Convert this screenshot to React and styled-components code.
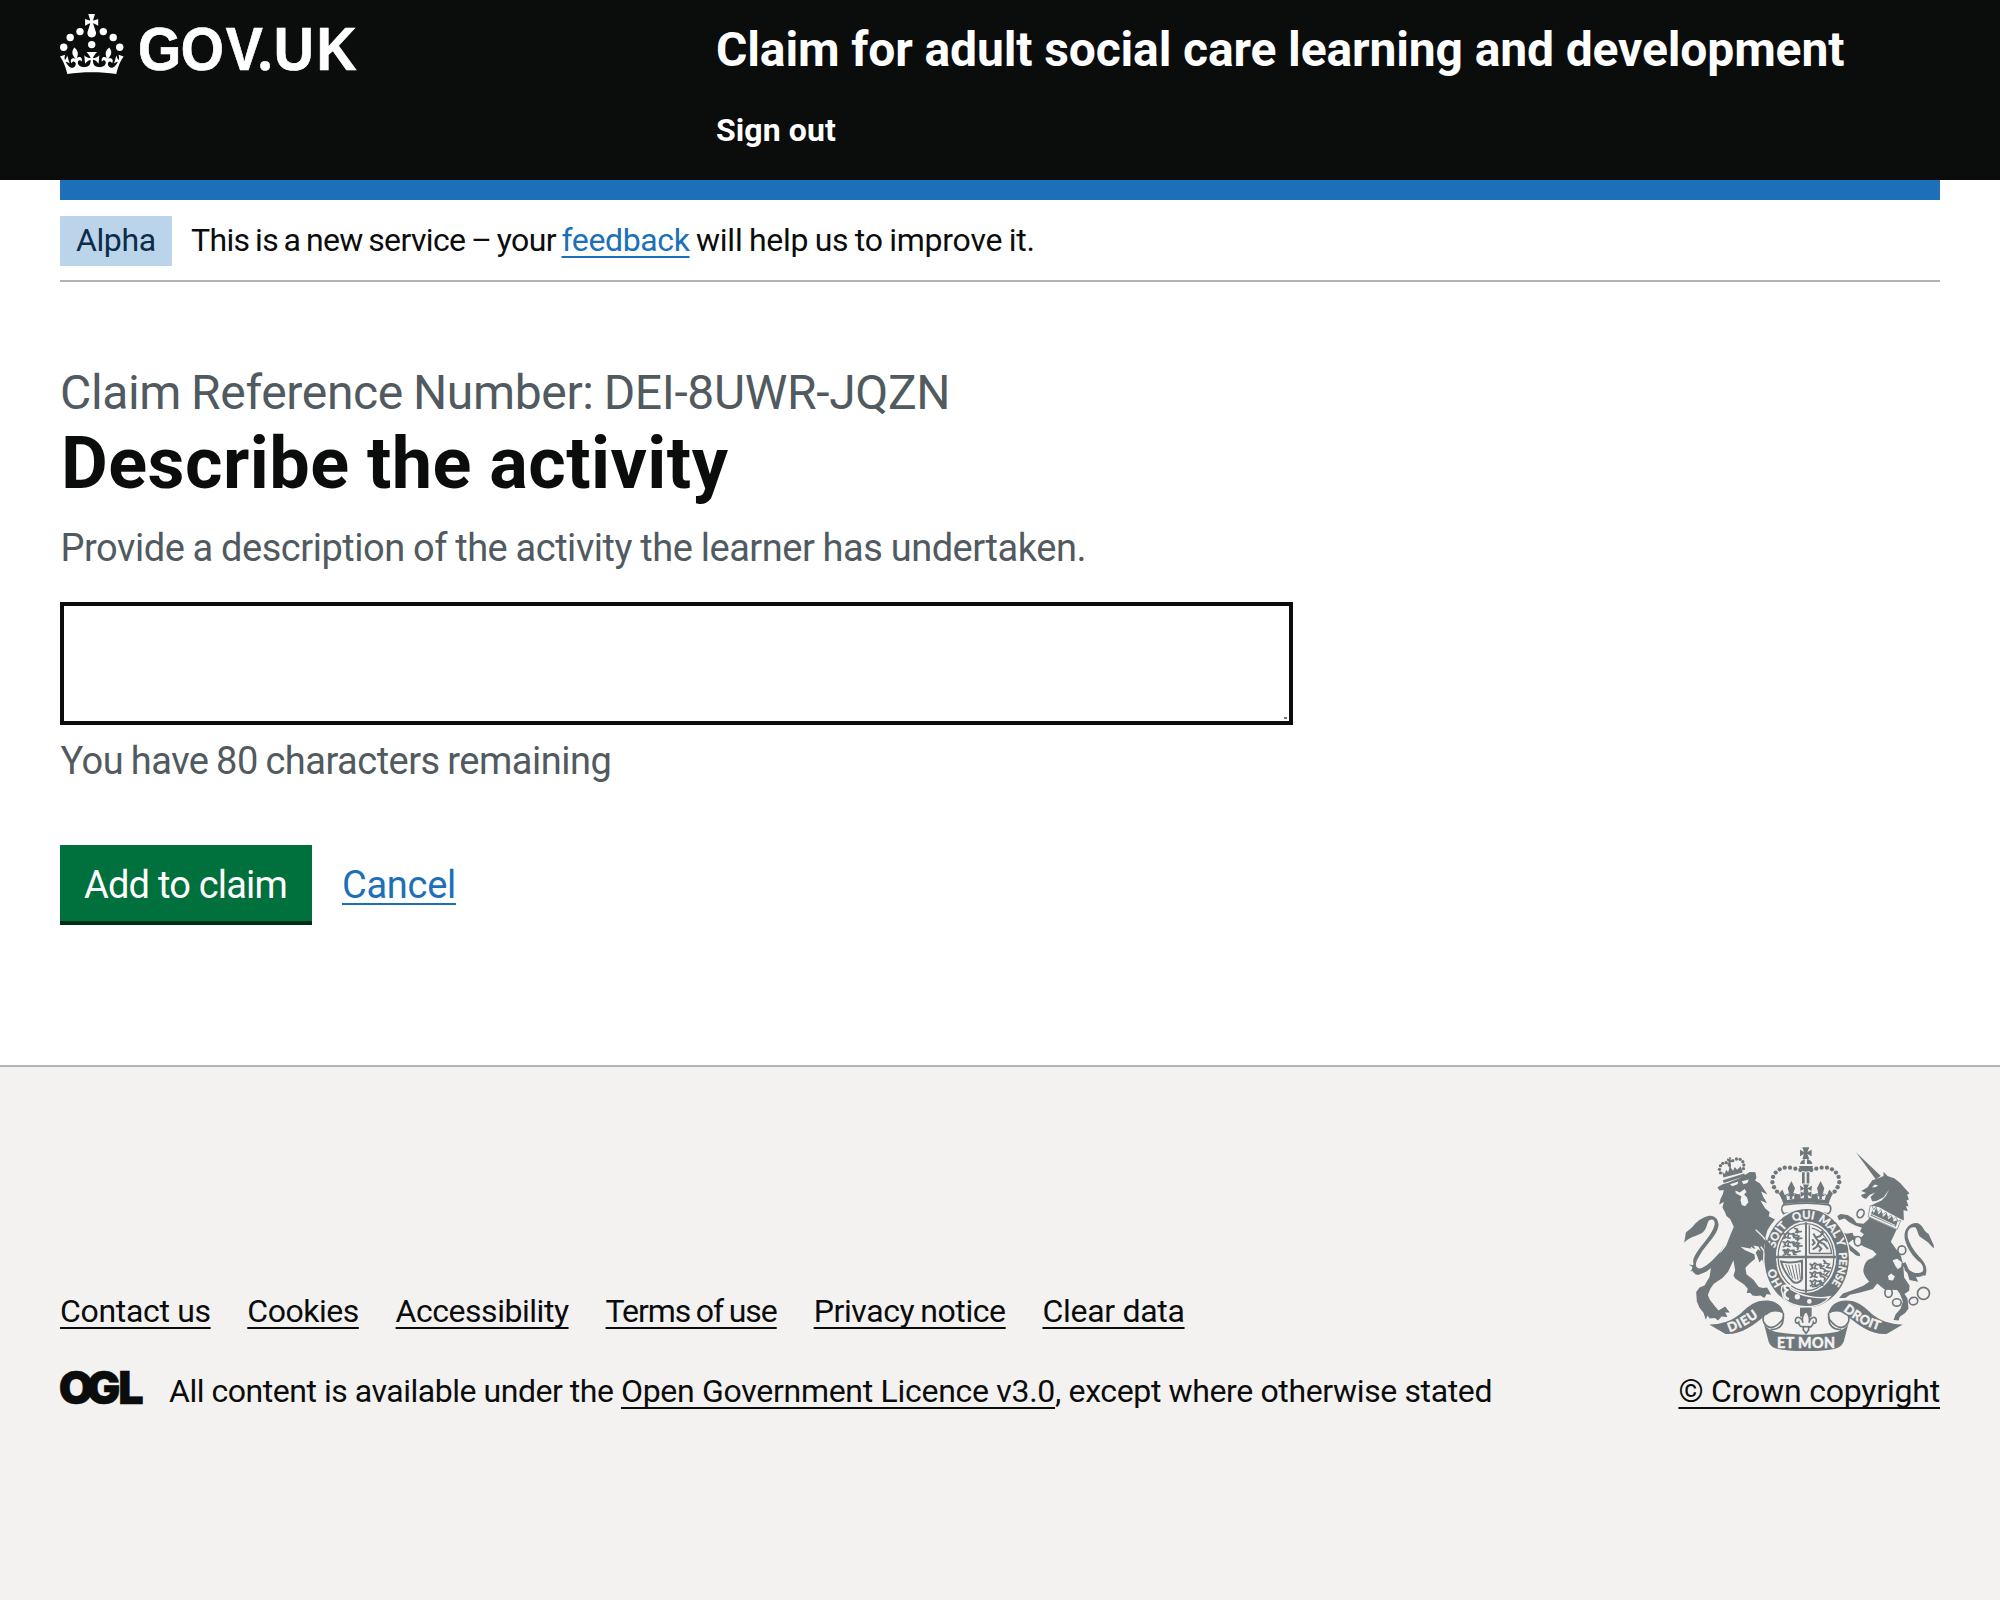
import React from 'react';
import styled, { createGlobalStyle } from 'styled-components';

const color = {
  ink: '#0b0c0c',
  brand: '#1d70b8',
  muted: '#505a5f',
  rule: '#b1b4b6',
  footer: '#f3f2f1',
  crest: '#6f777b',
};

const GlobalStyle = createGlobalStyle`
  *, *::before, *::after { box-sizing: border-box; }
  body {
    margin: 0;
    background: ${color.footer};
    color: ${color.ink};
    font-family: Roboto, "Liberation Sans", sans-serif;
    font-size: 32px;
    line-height: 50px;
  }
`;

const Page = styled.div`
  min-height: 1600px;
  display: flex;
  flex-direction: column;
`;

const Container = styled.div`
  margin: 0 60px;
`;

const Header = styled.header`
  height: 180px;
  flex: none;
  background: ${color.ink};
  color: #fff;
`;

const HeaderRow = styled(Container)`
  display: grid;
  grid-template-columns: 656px 1fr;
`;

const LogoLink = styled.a`
  display: block;
  padding-top: 14px;
  color: #fff;
  svg { display: block; overflow: visible; }
`;

const HeaderContent = styled.div`
  padding-top: 20px;
  display: flex;
  flex-direction: column;
  gap: 25px;
`;

const ServiceName = styled.a`
  font-size: 48px;
  line-height: 60px;
  font-weight: 700;
  letter-spacing: -0.13px;
  white-space: nowrap;
`;

const NavItem = styled.a`
  font-weight: 700;
  letter-spacing: 0.1px;
`;

const BrandBar = styled.div`
  height: 20px;
  background: ${color.brand};
`;

const PhaseBanner = styled.div`
  height: 82px;
  padding-top: 16px;
  display: flex;
  gap: 19px;
  border-bottom: 2px solid ${color.rule};
`;

const Tag = styled.strong`
  width: 112px;
  height: 50px;
  padding-left: 16px;
  background: #bbd4ea;
  color: #0c2d4a;
  font-weight: 400;
  line-height: 48px;
  letter-spacing: -0.4px;
`;

const BannerText = styled.span`
  line-height: 48px;
  white-space: nowrap;
`;

const Run = styled.span`
  letter-spacing: ${(p) => p.$track}px;
  word-spacing: ${(p) => p.$gap || 0}px;
`;

const Link = styled.a`
  color: ${(p) => (p.$plain ? color.ink : color.brand)};
  text-decoration: underline;
  text-decoration-thickness: 2px;
  text-underline-offset: ${(p) => p.$offset || 5}px;
  text-decoration-skip-ink: none;
  letter-spacing: ${(p) => p.$track || 0}px;
  word-spacing: ${(p) => p.$gap || 0}px;
`;

const Top = styled.div`
  flex: none;
  height: 885px;
  background: #fff;
`;

const Main = styled.main`
  padding-top: 81px;
  font-size: 38px;
`;

const Caption = styled.span`
  display: block;
  height: 62px;
  font-size: 48px;
  line-height: 60px;
  letter-spacing: -0.35px;
  word-spacing: -1.5px;
  color: ${color.muted};
`;

const Heading = styled.h1`
  margin: 0 0 21px;
  padding-left: 1px;
  font-size: 72px;
  line-height: 77px;
  font-weight: 700;
  letter-spacing: 0.45px;
  word-spacing: -1px;
`;

const Hint = styled.div`
  padding-left: 0.5px;
  color: ${color.muted};
  letter-spacing: ${(p) => p.$track}px;
  word-spacing: ${(p) => p.$gap || 0}px;
`;

const TextArea = styled.textarea`
  display: block;
  width: 1233px;
  height: 123px;
  margin: 29px 0 11px;
  padding: 10px;
  border: 4px solid ${color.ink};
  border-radius: 0;
  background: linear-gradient(#777, #777) no-repeat right 2px bottom 2px / 3px 2px #fff;
  font: inherit;
  outline: none;
  overflow: hidden;
  resize: none;
`;

const ButtonGroup = styled.div`
  margin-top: 59px;
  display: flex;
  align-items: flex-start;
  gap: 30px;
`;

const Button = styled.button`
  width: 252px;
  height: 76px;
  padding: 15px 0 11px 24px;
  border: 0;
  background: #00703c;
  box-shadow: 0 4px 0 #002d18;
  color: #fff;
  font: inherit;
  letter-spacing: -0.8px;
  text-align: left;
  white-space: nowrap;
`;

const CancelSlot = styled.div`
  padding-top: 15px;
`;

const Footer = styled.footer`
  flex: 1;
  border-top: 2px solid ${color.rule};
  background: ${color.footer};
  padding-top: 80px;
`;

const FooterRow = styled(Container)`
  display: flex;
  justify-content: space-between;
  align-items: flex-end;
`;

const FooterLinks = styled.ul`
  margin: 0 0 30px;
  padding: 0;
  list-style: none;
  display: flex;
  gap: 36.8px;
`;

const FooterItem = styled.li`
  width: ${(p) => p.$width}px;
  white-space: nowrap;
`;

const Licence = styled.div`
  display: flex;
  gap: 27px;
  white-space: nowrap;
  svg { display: block; margin-top: 3px; overflow: visible; }
`;

const Copyright = styled.div`
  display: flex;
  flex-direction: column;
  align-items: center;
  gap: 15px;
  svg { display: block; }
`;

function GovLogo() {
  return (
    <LogoLink>
      <svg width="324" height="62" viewBox="0 0 324 62" fill="#fff" role="img" aria-label="GOV.UK">
        <circle cx="20" cy="17.6" r="3.7" />
        <circle cx="10.2" cy="23.5" r="3.7" />
        <circle cx="3.7" cy="33.2" r="3.7" />
        <circle cx="31.7" cy="30.6" r="3.7" />
        <circle cx="43.3" cy="17.6" r="3.7" />
        <circle cx="53.2" cy="23.5" r="3.7" />
        <circle cx="59.7" cy="33.2" r="3.7" />
        <path d="M33.1,9.8c.2-.1.3-.3.5-.5l4.6,2.4v-6.8l-4.6,1.5c-.1-.2-.3-.3-.5-.5l1.9-5.9h-6.7l1.9,5.9c-.2.1-.3.3-.5.5l-4.6-1.5v6.8l4.6-2.4c.1.2.3.3.5.5l-2.6,8c-.9,2.8,1.2,5.7,4.1,5.7h0c3,0,5.1-2.9,4.1-5.7l-2.6-8ZM37,37.9s-3.4,3.8-4.1,6.1c2.2,0,4.2-.5,6.4-2.8l-.7,8.5c-2-2.8-4.4-4.1-5.7-3.8.1,3.1.5,6.7,5.8,7.2,3.7.3,6.7-1.5,7-3.8.4-2.6-2-4.3-3.7-1.6-1.4-4.5,2.4-6.1,4.9-3.2-1.9-4.5-1.8-7.7,2.4-10.9,3,4,2.6,7.3-1.2,11.1,2.4-1.3,6.2,0,4,4.6-1.2-2.8-3.7-2.2-4.2.2-.3,1.7.7,3.7,3,4.2,1.9.3,4.7-.9,7-5.9-1.3,0-2.4.7-3.9,1.7l2.4-8c.6,2.3,1.4,3.7,2.2,4.5.6-1.6.5-2.8,0-5.3l5,1.8c-2.6,3.6-5.2,8.7-7.3,17.5-7.4-1.1-15.7-1.7-24.5-1.7h0c-8.8,0-17.1.6-24.5,1.7-2.1-8.9-4.7-13.9-7.3-17.5l5-1.8c-.5,2.5-.6,3.7,0,5.3.8-.8,1.6-2.3,2.2-4.5l2.4,8c-1.5-1-2.6-1.7-3.9-1.7,2.3,5,5.2,6.2,7,5.9,2.3-.4,3.3-2.4,3-4.2-.5-2.4-3-3.1-4.2-.2-2.2-4.6,1.6-6,4-4.6-3.7-3.7-4.2-7.1-1.2-11.1,4.2,3.2,4.3,6.4,2.4,10.9,2.5-2.8,6.3-1.3,4.9,3.2-1.8-2.7-4.1-1-3.7,1.6.3,2.3,3.3,4.1,7,3.8,5.4-.5,5.7-4.2,5.8-7.2-1.3-.2-3.7,1-5.7,3.8l-.7-8.5c2.2,2.3,4.2,2.7,6.4,2.8-.7-2.3-4.1-6.1-4.1-6.1h10.6Z" />
        <text
          transform="scale(0.91 1)"
          x="85.6 132.8 182.2 216.4 235 281.8"
          y="56"
          fontFamily="Liberation Sans, sans-serif"
          fontWeight="700"
          fontSize="61"
          stroke="#fff"
          strokeWidth="0.7"
        >
          GOV<tspan fontFamily="Roboto, sans-serif" fontSize="63">.</tspan>UK
        </text>
      </svg>
    </LogoLink>
  );
}

function OglLogo() {
  return (
    <svg width="82" height="42" viewBox="0 0 82 42" fill={color.ink} stroke={color.ink} strokeWidth="0.6">
      <text x="-1.3 26.5 58.2" y="35" fontFamily="Inter, sans-serif" fontWeight="900" fontSize="45">OGL</text>
    </svg>
  );
}

const archDots = [
  [391, 119], [376, 115], [360, 112], [344, 112], [329, 117], [317, 127], [309, 140], [307, 156], [312, 171], [321, 184],
];

const lionDots = [
  [151, 128], [148, 117], [151, 106], [158, 99], [168, 97], [188, 91], [199, 86], [210, 87], [218, 94], [221, 104], [220, 115],
];

function Beasts({ x, y }) {
  return (
    <g transform={`translate(${x} ${y})`} fill="none" stroke={color.crest} strokeWidth="5" strokeLinecap="round">
      {[0, 25, 50].map((dy) => (
        <g key={dy} transform={`translate(0 ${dy})`}>
          <path d="M2 4l8 3 6-6 8 5 10-2 4 7 6-2M6 10l5 5-8 4M18 8l-2 9 7 1M32 8l2 8 7 1M45 2l3-5-5-4" />
        </g>
      ))}
    </g>
  );
}

function RoyalArms() {
  const bg = color.footer;
  return (
    <svg width="250" height="204" viewBox="42 50 750 613" fill={color.crest}>
      {/* lion */}
      <path d="M158 150L222 130L226 137L161 158Z" />
      {lionDots.map(([x, y]) => <circle key={x} cx={x} cy={y} r="5" />)}
      <path d="M160 142L156 124L164 131L168 118L174 126L178 112L174 107L171 98L177 96L170 90L172 84L178 87L176 80L184 82L181 88L187 93L181 97L183 105L182 112L189 121L194 110L201 118L212 108L218 127Z" />
      <path d="M142 171L158 162L176 157L206 145L224 134L239 125L256 126L259 142L255 151L269 159L278 172L292 193L273 184L279 199L291 219L271 211L285 234L299 246L296 258L315 268L303 283L292 300L286 322L305 344L314 367L319 397L312 407L305 396L298 411L291 398L282 403L276 387L268 397L263 382L257 368L264 357L272 363L265 349L250 346L256 356L236 354L211 350L225 360L253 372L255 386L239 399L226 413L229 432L250 449L266 471L279 474L291 472L297 482L303 494L290 492L283 504L271 496L260 498L247 496L241 489L230 489L233 476L222 463L196 446L190 437L195 420L190 390L174 425L157 444L131 461L121 475L113 495L119 509L135 529L145 541L165 529L179 547L165 547L172 561L154 559L144 571L134 564L119 565L112 556L107 569L100 548L88 533L80 514L78 486L88 472L103 466L118 441L122 416L134 389L150 370L168 347L181 314L191 290L180 266L169 257L165 247L157 232L161 215L147 223L151 206L158 192L161 179L148 181Z" />
      <path d="M70 401C62 417 65 430 84 435L108 425L125 412C142 396 151 379 151 367L164 340L151 365L132 385C112 406 93 418 84 414C71 409 78 392 90 373C111 339 142 314 145 287C147 267 132 253 115 257C90 263 78 276 65 292L47 307L42 338C55 321 77 318 94 309C110 300 108 285 116 271C128 263 136 272 133 285C126 311 101 337 84 360C72 377 66 390 70 401Z" />
      <path d="M70 405L56 403L69 412L60 424L72 420L77 434L84 428Z" />
      <path d="M179 162L205 154L202 162L187 168ZM215 153L236 148L232 158L220 162ZM196 181L209 187L224 176L229 185L222 193L231 202L235 216L225 228L215 224L211 210L214 199L197 189Z" fill={bg} />
      <path d="M257 299C278 318 302 343 315 373M243 351L255 363M272 349L284 366" stroke={bg} strokeWidth="4" fill="none" />

      {/* unicorn */}
      <path d="M558 66L633 137L618 148Z" />
      <path d="M574 182L593 171L607 150L628 143L641 137L641 124L653 137L674 145L691 158L705 174L719 190L712 193L717 208L710 211L716 228L708 227L714 242L701 240L702 271L688 264L660 249L628 231L603 226L617 219L635 211L648 197L658 178L641 201L619 212L607 213L602 200L616 187L599 194L588 206L577 201L573 194L589 188Z" />
      <path d="M606 171L615 163L625 166L616 171Z" fill={bg} />
      <path d="M601 226L607 227L611 239L618 230L624 247L633 238L638 254L648 246L653 263L663 254L668 269L678 260L684 273L693 270L682 298L595 259Z" fill={bg} stroke={color.crest} strokeWidth="2" />
      <path d="M607 240L612 249L618 234L626 253L635 242L639 260L651 249L655 267L667 258L671 274L684 270L678 290L602 256Z" />
      <path d="M604 252L676 286" stroke={bg} strokeWidth="3" />
      <path d="M596 267L581 281L560 278L550 265L533 254L512 251L502 257L507 270L524 265L538 276L556 286L576 293L570 303L582 312L573 323L551 317L548 308L530 311L514 305L521 322L516 338L527 351L547 366L559 376L571 378L569 369L544 348L535 339L548 329L561 338L583 350L609 361L620 372L607 384C592 388 583 396 580 422C582 436 590 445 598 455L580 467L545 481L519 490L507 504L526 504L540 494L571 487L609 477L622 460L645 479L682 480L690 491L699 514L692 536L677 553L671 570L686 571L690 560L706 549L716 535L713 505L704 492L718 482L719 466L703 442L700 403L693 377L680 359L663 335L680 299L597 261Z" />
      <path d="M695 400L712 426L719 450L745 455L738 440L718 421L707 396Z" />
      <path d="M766 438L755 432C763 420 762 408 752 398C729 379 712 356 705 327C700 300 715 279 740 278C760 281 758 301 776 311L792 345L792 355L774 336L754 322C744 318 745 302 737 292C719 288 711 303 714 322C722 348 736 367 756 388C771 405 773 423 766 438Z" />
      <path d="M706 405C722 430 745 436 764 420L768 430C748 449 719 440 704 419Z" />
      <path d="M668 390L682 386L696 396L694 410L684 417L677 408ZM654 438L664 430L675 439L669 451L657 450Z" fill={bg} />
      <g fill="none" stroke={color.crest} strokeWidth="5">
        <ellipse cx="572" cy="250" rx="10" ry="13" transform="rotate(25 572 250)" />
        <ellipse cx="564" cy="333" rx="11" ry="14" fill={bg} />
        <ellipse cx="696" cy="360" rx="12" ry="13" fill={bg} />
        <ellipse cx="656" cy="488" rx="11" ry="14" />
        <ellipse cx="681" cy="517" rx="13" ry="11" />
        <ellipse cx="731" cy="513" rx="13" ry="11" transform="rotate(-20 731 513)" />
        <circle cx="761" cy="490" r="18" />
      </g>

      {/* crown */}
      <path d="M397 51H418L412 65L425 58V78L412 71L418 86H397L402 71L390 78V58L402 65ZM390 101C392 91 404 86 404 86V101H390ZM411 86C421 88 427 95 427 101H411ZM387 107H429C427 119 418 124 408 124S390 119 387 107Z" />
      <path d="M396 126H404V160H396ZM410 126H418V160H410Z" />
      {archDots.map(([x, y]) => (
        <g key={`${x}-${y}`}>
          <circle cx={x} cy={y} r="6.5" />
          <circle cx={815 - x} cy={y} r="6.5" />
        </g>
      ))}
      <path d="M315 175L325 191L337 178L344 194L357 188L353 174L364 152L375 174L370 188L388 193L392 184L390 166L403 174L399 163H417L412 174L426 166L424 184L428 193L445 188L441 174L452 152L463 174L459 188L471 194L478 178L490 191L500 175C488 190 479 207 476 221C433 216 382 216 340 221C336 206 327 189 315 175Z" />
      <path d="M390 183L402 176L399 195L408 184L418 195L413 176L426 183L424 204H392ZM349 196L361 188L364 199L374 190L372 206L351 209ZM442 190L452 199L457 188L468 196L464 209L444 206Z" fill={bg} />
      <path d="M408 176L412 189L424 184V200L413 194L416 207H400L403 194L392 200V184L403 189ZM364 172L368 190L376 197L367 198V208H359V198L351 197L359 190ZM452 172L457 190L465 197L456 198V208H448V198L440 197L448 190Z" />
      <path d="M340 224C381 218 435 218 477 224C486 231 483 245 474 251C430 240 385 240 341 251C333 241 334 230 340 224Z" fill={bg} stroke={color.crest} strokeWidth="5" />

      {/* garter and shield */}
      <path d="M346 250C385 232 432 232 470 250C510 275 541 325 541 384C541 468 482 536 410 536S279 468 279 384C279 325 305 275 346 250Z" fill={bg} />
      <ellipse cx="410" cy="384" rx="127" ry="148" />
      <ellipse cx="408" cy="381" rx="91" ry="108" fill={bg} />
      <ellipse cx="408" cy="381" rx="84" ry="101" fill="none" stroke={color.crest} strokeWidth="4" />
      <path d="M405 276H411V488H405ZM318 377H498V384H318Z" />
      <path d="M418 285V370M418 370H487M425 294C450 298 478 325 485 368" stroke={color.crest} strokeWidth="4" fill="none" />
      <path d="M430 310L437 322L450 318L459 308L454 302M437 322L447 335L440 350L428 358M447 335L462 342L474 357M447 335L461 326L472 333M444 344L454 356L447 364M427 327L434 338L426 345" stroke={color.crest} strokeWidth="6" fill="none" />
      <Beasts x={337} y={306} />
      <Beasts x={418} y={398} />
      <path d="M372 294L382 297 378 306 396 304M376 315L387 318 380 326 397 324M376 337L388 340 380 348 398 347M463 398L478 402 470 412 484 414M463 422L477 424 466 436 476 440M340 358L352 362 346 370M366 362L378 366 392 362M425 470L440 468 450 460" stroke={color.crest} strokeWidth="5" fill="none" />
      <path d="M333 394C350 398 370 400 396 392V445C392 458 376 462 368 454C355 441 341 424 333 394Z" fill="none" stroke={color.crest} strokeWidth="6" />
      <path d="M347 402L360 436M356 404L368 445M366 404L376 448M376 403L384 449M386 401L391 446" stroke={color.crest} strokeWidth="3" />
      <path id="motto" d="M410 502A98 118 0 0 1 312 384A98 118 0 0 1 410 266A98 118 0 0 1 508 384A98 118 0 0 1 410 502" fill="none" />
      <g fill={bg} stroke={bg} strokeWidth="1" fontFamily="Lato, sans-serif" fontWeight="700" fontSize="34" textAnchor="middle">
        <text><textPath href="#motto" startOffset="113">HO</textPath></text>
        <text><textPath href="#motto" startOffset="238">SOIT</textPath></text>
        <text><textPath href="#motto" startOffset="330">QUI</textPath></text>
        <text><textPath href="#motto" startOffset="411">MAL</textPath></text>
        <text><textPath href="#motto" startOffset="465">Y</textPath></text>
        <text fontSize="32"><textPath href="#motto" startOffset="542">PENSE</textPath></text>
      </g>
      <path d="M286 326L304 346L316 370L320 404L311 408L303 397L300 410L290 402L282 360Z" />
      <path d="M335 470C345 460 360 466 363 478C398 500 443 507 479 500L468 512C437 536 380 537 345 509C333 499 341 490 334 482Z" stroke={bg} strokeWidth="4" />
      <path d="M363 467C340 463 339 474 351 480C340 487 339 503 357 507" fill="none" stroke={bg} strokeWidth="7" />
      <circle cx="382" cy="500" r="8" fill={bg} />
      <circle cx="418" cy="514" r="7" fill={bg} />

      {/* fleur-de-lis */}
      <path d="M390 533H425V560H390Z" />
      <path d="M408 542C418 555 421 566 417 578C421 560 439 556 439 572C438 582 432 581 430 577C428 591 420 591 416 590L416 600L408 610L400 600V590C394 591 387 589 386 577C382 582 376 579 376 571C377 557 395 560 399 578C394 566 398 554 408 542Z" fill={bg} stroke={color.crest} strokeWidth="5" />
      <path d="M397 590H420" stroke={color.crest} strokeWidth="5" />

      {/* ribbon */}
      <path d="M117 583C150 584 185 573 210 552C236 525 256 511 288 511C319 511 336 528 342 552C320 539 302 544 292 553L285 556C252 585 211 615 166 612Z" />
      <path d="M699 583C666 584 631 573 606 552C580 525 560 511 528 511C497 511 480 528 474 552C496 539 514 544 524 553L531 556C564 585 605 615 650 612Z" />
      <path d="M281 558C275 570 283 588 299 592C319 595 332 575 340 565V549M338 560C344 584 325 601 302 598M535 558C541 570 533 588 517 592C497 595 484 575 476 565V549M478 560C472 584 491 601 514 598" fill="none" stroke={color.crest} strokeWidth="5" />
      <path d="M281 579C288 595 302 602 324 607C380 617 440 617 494 607C517 602 530 593 536 579L524 625C521 643 512 652 493 657C440 666 375 666 323 657C304 652 296 643 293 625Z" />
      <path id="dieu" d="M178 606C215 595 247 574 284 545" fill="none" />
      <path id="droit" d="M519 542C556 570 590 593 650 607" fill="none" />
      <g fill={bg} stroke={bg} strokeWidth="1.6" fontFamily="Lato, sans-serif" fontWeight="700">
        <text fontSize="38" letterSpacing="3"><textPath href="#dieu">DIEU</textPath></text>
        <text fontSize="38" letterSpacing="1.5"><textPath href="#droit">DROIT</textPath></text>
        <text x="321" y="654" fontSize="43" textLength="174">ET MON</text>
      </g>
    </svg>
  );
}

const footerLinks = [
  { label: 'Contact us', width: 150.5, track: -0.33 },
  { label: 'Cookies', width: 111.5, track: -0.47 },
  { label: 'Accessibility', width: 173.2, track: -0.47 },
  { label: 'Terms of use', width: 171.3, track: -1.05, gap: -1.3 },
  { label: 'Privacy notice', width: 192, track: -0.4, gap: -1.6 },
  { label: 'Clear data', width: 142, track: -0.3 },
];

export default function App() {
  return (
    <Page>
      <GlobalStyle />
      <Header>
        <HeaderRow>
          <GovLogo />
          <HeaderContent>
            <ServiceName>Claim for adult social care learning and development</ServiceName>
            <NavItem>Sign out</NavItem>
          </HeaderContent>
        </HeaderRow>
      </Header>
      <Top>
        <Container>
          <BrandBar />
          <PhaseBanner>
            <Tag>Alpha</Tag>
            <BannerText>
              <Run $track={-0.65} $gap={-1.7}>This is a new service – your </Run>
              <Link $track={-0.38}>feedback</Link>
              <Run $track={-0.25} $gap={-1.2}> will help us to improve it.</Run>
            </BannerText>
          </PhaseBanner>
          <Main>
            <Caption>Claim Reference Number: DEI-8UWR-JQZN</Caption>
            <Heading>Describe the activity</Heading>
            <Hint $track={-0.47} $gap={-0.7}>Provide a description of the activity the learner has undertaken.</Hint>
            <TextArea aria-label="Describe the activity" />
            <Hint $track={-0.5} $gap={-1.3}>You have 80 characters remaining</Hint>
            <ButtonGroup>
              <Button>Add to claim</Button>
              <CancelSlot>
                <Link $track={-0.28} $offset={5}>Cancel</Link>
              </CancelSlot>
            </ButtonGroup>
          </Main>
        </Container>
      </Top>
      <Footer>
        <FooterRow>
          <div>
            <FooterLinks>
              {footerLinks.map((l) => (
                <FooterItem key={l.label} $width={l.width}>
                  <Link $plain $track={l.track} $gap={l.gap}>{l.label}</Link>
                </FooterItem>
              ))}
            </FooterLinks>
            <Licence>
              <OglLogo />
              <span>
                <Run $track={-0.47}>All content is available under the </Run>
                <Link $plain $track={-0.29}>Open Government Licence v3.0</Link>
                <Run $track={-0.37}>, except where otherwise stated</Run>
              </span>
            </Licence>
          </div>
          <Copyright>
            <RoyalArms />
            <Link $plain $track={-0.2}>© Crown copyright</Link>
          </Copyright>
        </FooterRow>
      </Footer>
    </Page>
  );
}
